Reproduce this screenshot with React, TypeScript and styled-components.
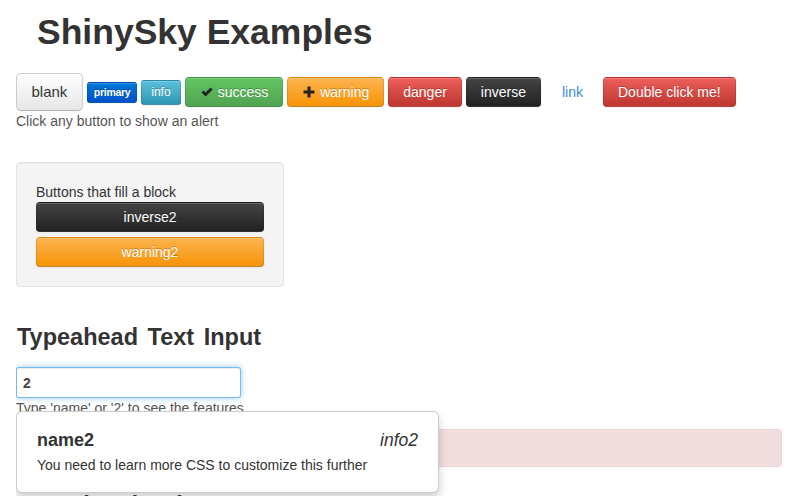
import React from "react";
import styled, { createGlobalStyle, css } from "styled-components";

const Global = createGlobalStyle`
  html, body { margin: 0; padding: 0; background: #fff; }
  body {
    font-family: "Liberation Sans", Arial, Helvetica, sans-serif;
    font-size: 14px;
    line-height: 20px;
    color: #333;
    overflow: hidden;
  }
`;

const Page = styled.div`
  width: 766px;
  margin-left: 16px;
  padding-top: 12px;
  height: 496px;
  overflow: hidden;
`;

const Title = styled.h1`
  margin: 0 0 21px 21px;
  font-size: 35.5px;
  line-height: 40px;
  font-weight: bold;
  color: #333;
`;

const ButtonRow = styled.div`
  display: flex;
  align-items: center;
  gap: 4px;
`;

type Variant =
  | "default"
  | "primary"
  | "info"
  | "success"
  | "warning"
  | "danger"
  | "inverse"
  | "link";
type Size = "large" | "normal" | "small" | "mini";

const palette: Record<string, [string, string]> = {
  primary: ["#0079d6", "#0050cc"],
  info: ["#5bc0de", "#2f96b4"],
  success: ["#62c462", "#51a351"],
  warning: ["#fbb450", "#f89406"],
  danger: ["#ee5f5b", "#bd362f"],
  inverse: ["#444444", "#222222"],
};

const Btn = styled.button<{ $v: Variant; $s: Size; $block?: boolean }>`
  display: ${(p) => (p.$block ? "block" : "inline-flex")};
  ${(p) => (p.$block ? "width: 100%;" : "")}
  align-items: center;
  justify-content: center;
  gap: 4px;
  box-sizing: border-box;
  font-family: "Liberation Sans", Arial, Helvetica, sans-serif;
  font-size: 14px;
  line-height: 20px;
  padding: 4px 14px;
  border-radius: 4px;
  border: 1px solid rgba(0, 0, 0, 0.1);
  border-bottom-color: rgba(0, 0, 0, 0.25);
  cursor: pointer;
  text-align: center;
  white-space: nowrap;
  box-shadow: inset 0 1px 0 rgba(255, 255, 255, 0.2),
    0 1px 2px rgba(0, 0, 0, 0.05);

  ${(p) =>
    p.$s === "large" &&
    css`
      font-size: 15px;
      line-height: 18px;
      padding: 9px 14.5px;
      border-radius: 5px;
    `}
  ${(p) =>
    p.$s === "small" &&
    css`
      font-size: 12px;
      line-height: 19px;
      padding: 2px 9px;
      border-radius: 3px;
    `}
  ${(p) =>
    p.$s === "mini" &&
    css`
      font-size: 10.5px;
      line-height: 15px;
      padding: 2px 6px;
      border-radius: 3px;
      font-weight: bold;
      letter-spacing: -0.3px;
    `}

  ${(p) => {
    if (p.$v === "default")
      return css`
        color: #333;
        background: linear-gradient(to bottom, #ffffff, #e6e6e6);
        border-color: #ccc #ccc #b3b3b3;
        text-shadow: 0 1px 1px rgba(255, 255, 255, 0.75);
      `;
    if (p.$v === "link")
      return css`
        color: #3b8ddc;
        background: transparent;
        border-color: transparent;
        box-shadow: none;
        padding-left: 16px;
        padding-right: 15px;
      `;
    const [a, b] = palette[p.$v];
    return css`
      color: #fff;
      text-shadow: 0 -1px 0 rgba(0, 0, 0, 0.25);
      background: linear-gradient(to bottom, ${a}, ${b});
      border-color: rgba(0, 0, 0, 0.1) rgba(0, 0, 0, 0.1) rgba(0, 0, 0, 0.25);
    `;
  }}
`;

const Hint = styled.div`
  color: #555;
`;

const Well = styled.div`
  box-sizing: border-box;
  width: 268px;
  margin-top: 31px;
  padding: 19px;
  background: #f4f4f4;
  border: 1px solid #e3e3e3;
  border-radius: 4px;
  box-shadow: inset 0 1px 1px rgba(0, 0, 0, 0.03);
  display: flex;
  flex-direction: column;
  gap: 5px;
`;

const WellLabel = styled.div`
  margin-bottom: -5px;
`;

const SectionTitle = styled.h3`
  margin: 30px 0 10px 1px;
  font-size: 23.5px;
  line-height: 40px;
  font-weight: bold;
  word-spacing: 3px;
  color: #333;
`;

const TypeaheadWrap = styled.div`
  position: relative;
`;

const Input = styled.input`
  box-sizing: border-box;
  width: 225px;
  height: 31px;
  padding: 4px 6px;
  font-family: "Liberation Sans", Arial, Helvetica, sans-serif;
  font-size: 14px;
  font-weight: bold;
  color: #444;
  border: 1px solid rgba(82, 168, 236, 0.8);
  border-radius: 3px;
  outline: none;
  box-shadow: inset 0 1px 1px rgba(0, 0, 0, 0.075),
    0 0 6px rgba(82, 168, 236, 0.6);
  display: block;
`;

const Menu = styled.div`
  position: absolute;
  left: 0;
  top: 44px;
  width: 423px;
  box-sizing: border-box;
  padding: 15px 20px 17px 20px;
  background: #fff;
  border: 1px solid rgba(0, 0, 0, 0.2);
  border-radius: 6px;
  box-shadow: 0 5px 10px rgba(0, 0, 0, 0.2);
  z-index: 10;
`;

const MenuHead = styled.div`
  display: flex;
  justify-content: space-between;
  align-items: baseline;
  line-height: 26px;
`;

const MenuName = styled.span`
  font-size: 18px;
  font-weight: bold;
`;

const MenuInfo = styled.span`
  font-size: 17.5px;
  font-style: italic;
`;

const MenuText = styled.div`
  margin-top: 2px;
`;

const Alert = styled.div`
  box-sizing: border-box;
  margin-top: 11px;
  height: 38px;
  background: #f2dede;
  border: 1px solid #eed3d7;
  border-radius: 4px;
`;

const NextTitle = styled(SectionTitle)`
  margin-top: 18px;
`;

const Check = () => (
  <svg width="14" height="14" viewBox="0 0 14 14" aria-hidden>
    <path d="M1.5 7.5 L3.6 5.4 L5.6 7.4 L10.6 2.4 L12.7 4.5 L5.6 11.6 Z" fill="#222" />
  </svg>
);

const Plus = () => (
  <svg width="14" height="14" viewBox="0 0 14 14" aria-hidden>
    <path d="M5.5 1.5 H8.5 V5.5 H12.5 V8.5 H8.5 V12.5 H5.5 V8.5 H1.5 V5.5 H5.5 Z" fill="#222" />
  </svg>
);

export default function App() {
  return (
    <>
      <Global />
      <Page>
        <Title>ShinySky Examples</Title>
        <ButtonRow>
          <Btn $v="default" $s="large">blank</Btn>
          <Btn $v="primary" $s="mini">primary</Btn>
          <Btn $v="info" $s="small">info</Btn>
          <Btn $v="success" $s="normal">
            <Check />
            success
          </Btn>
          <Btn $v="warning" $s="normal">
            <Plus />
            warning
          </Btn>
          <Btn $v="danger" $s="normal">danger</Btn>
          <Btn $v="inverse" $s="normal">inverse</Btn>
          <Btn $v="link" $s="normal">link</Btn>
          <Btn $v="danger" $s="normal">Double click me!</Btn>
        </ButtonRow>
        <Hint>Click any button to show an alert</Hint>

        <Well>
          <WellLabel>Buttons that fill a block</WellLabel>
          <Btn $v="inverse" $s="normal" $block>inverse2</Btn>
          <Btn $v="warning" $s="normal" $block>warning2</Btn>
        </Well>

        <SectionTitle>Typeahead Text Input</SectionTitle>
        <TypeaheadWrap>
          <Input defaultValue="2" />
          <Hint>Type 'name' or '2' to see the features</Hint>
          <Menu>
            <MenuHead>
              <MenuName>name2</MenuName>
              <MenuInfo>info2</MenuInfo>
            </MenuHead>
            <MenuText>You need to learn more CSS to customize this further</MenuText>
          </Menu>
        </TypeaheadWrap>
        <Alert />
        <NextTitle>Typeahead Select Input</NextTitle>
      </Page>
    </>
  );
}
